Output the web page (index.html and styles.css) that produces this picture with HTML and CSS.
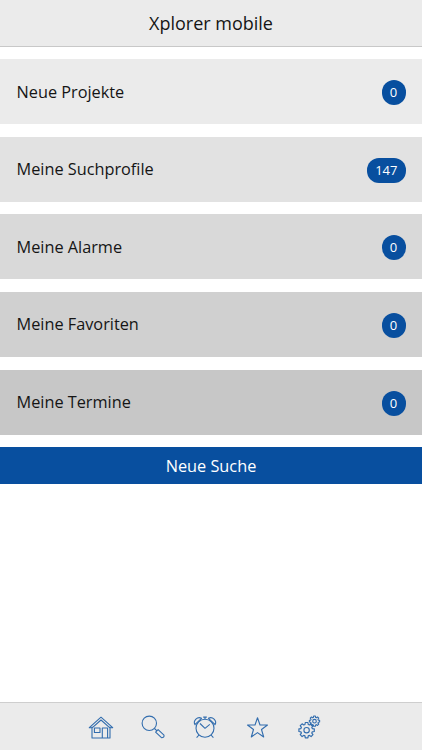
FILE: index.html
```html
<!DOCTYPE html>
<html lang="de">
<head>
    <meta charset="UTF-8">
    <meta name="viewport" content="width=device-width, initial-scale=1.0">
    <title>Xplorer mobile</title>
    <link rel="stylesheet" href="styles.css">
</head>
<body>

<!-- Header -->
<header class="header">
    <h1>Xplorer mobile</h1>
</header>

<!-- Menu -->
<main class="content">
    <ul class="menu">
        <li class="menu-item level-1"><span>Neue Projekte</span><span class="badge">0</span></li>
        <li class="menu-item level-2"><span>Meine Suchprofile</span><span class="badge">147</span></li>
        <li class="menu-item level-3"><span>Meine Alarme</span><span class="badge">0</span></li>
        <li class="menu-item level-4"><span>Meine Favoriten</span><span class="badge">0</span></li>
        <li class="menu-item level-5"><span>Meine Termine</span><span class="badge">0</span></li>
    </ul>
    <button class="search-button">Neue Suche</button>
</main>

<!-- Footer Navigation -->
<nav class="footer">
    <a class="nav-link" aria-label="Home">
        <svg viewBox="0 0 26 26">
            <path d="M4 12.8V24H22V12.8M1.3 13.7L13 3.2L24.7 13.7H21.6L13 6L4.4 13.7Z"/>
            <path d="M6.4 14H12V18.5H6.4ZM14.3 24V14H19.6V24"/>
        </svg>
    </a>
    <a class="nav-link" aria-label="Suche">
        <svg viewBox="0 0 26 26">
            <circle cx="9.3" cy="9.3" r="7.2"/>
            <path d="M14.5 14.5L16.7 16.7M15.6 18.1L18.1 15.6L24 21.2Q24.3 23.8 21.5 23.7Z"/>
        </svg>
    </a>
    <a class="nav-link" aria-label="Alarme">
        <svg viewBox="0 0 26 26">
            <circle cx="13" cy="14.2" r="9"/>
            <path d="M8 9.5L13 14.3L17.8 10.3M13 5.2V3.1M11.2 3.1H14.8"/>
            <path d="M2.9 10.6C.8 6.8 5.5 2 9.5 4.3ZM23.1 10.6C25.2 6.8 20.5 2 16.5 4.3Z"/>
            <path d="M7 21L4.6 23.7M19 21L21.4 23.7"/>
        </svg>
    </a>
    <a class="nav-link" aria-label="Favoriten">
        <svg viewBox="0 0 26 26">
            <path d="M13.5 3.7L16 11H23.5L17.5 15.5L19.7 23L13.5 18.6L7.3 23L9.5 15.5L3.5 11H11Z"/>
        </svg>
    </a>
    <a class="nav-link" aria-label="Einstellungen">
        <svg viewBox="0 0 26 26">
            <defs>
                <path id="gear" d="M-2.1-7.3L-1.7-9.85H1.7L2.1-7.3L3.68-6.65L5.76-8.17L8.17-5.76L6.65-3.68L7.3-2.1L9.85-1.7V1.7L7.3 2.1L6.65 3.68L8.17 5.76L5.76 8.17L3.68 6.65L2.1 7.3L1.7 9.85H-1.7L-2.1 7.3L-3.68 6.65L-5.76 8.17L-8.17 5.76L-6.65 3.68L-7.3 2.1L-9.85 1.7V-1.7L-7.3-2.1L-6.65-3.68L-8.17-5.76L-5.76-8.17L-3.68-6.65Z"/>
            </defs>
            <use class="gear-large" href="#gear" transform="translate(10.6 16.2) scale(.78)"/>
            <circle cx="10.6" cy="16.2" r="2.7"/>
            <use class="gear-small" href="#gear" transform="translate(18.5 7.2) scale(.52)"/>
            <circle cx="18.5" cy="7.2" r="1.8"/>
        </svg>
    </a>
</nav>

</body>
</html>
```

FILE: styles.css
```css
/* Global Reset */
* {
    margin: 0;
    padding: 0;
    box-sizing: border-box;
}

:root {
    --primary-color: #084f9f;
    --icon-color: #326dae;
    --bar-color: #ebebeb;
}

body {
    display: flex;
    flex-direction: column;
    height: 100vh;
    font-family: 'Open Sans', sans-serif;
    background-color: #fff;
    color: #151515;
}

/* Header */
.header {
    height: 47px;
    border-bottom: 1px solid #c8c8c8;
    background-color: var(--bar-color);
    text-align: center;
}

.header h1 {
    font-size: 18px;
    font-weight: 400;
    line-height: 46px;
}

/* Menu */
.content {
    flex: 1;
    padding-top: 12.4px;
}

.menu {
    list-style: none;
}

.menu-item {
    display: flex;
    align-items: center;
    justify-content: space-between;
    height: 65px;
    margin-bottom: 12.5px;
    padding: 0 16.5px;
    font-size: 16.3px;
}

.level-1 { background-color: #ebebeb; }
.level-2 { background-color: #e2e2e2; }
.level-3 { background-color: #d9d9d9; }
.level-4 { background-color: #d0d0d0; margin-bottom: 13px; }
.level-5 { background-color: #c7c7c7; }

.badge {
    min-width: 24px;
    height: 25px;
    margin-top: 2px;
    padding: 0 8px;
    border-radius: 12px;
    background-color: var(--primary-color);
    color: #fff;
    font-size: 13px;
    line-height: 25px;
    text-align: center;
}

.search-button {
    display: block;
    width: 100%;
    height: 37px;
    border: none;
    background-color: var(--primary-color);
    color: #fff;
    font-family: inherit;
    font-size: 16.3px;
}

/* Footer Navigation */
.footer {
    display: flex;
    justify-content: center;
    gap: 26px;
    height: 48px;
    padding: 11px 12px 0 0;
    border-top: 1px solid #cecece;
    background-color: var(--bar-color);
}

.nav-link {
    width: 26px;
    height: 26px;
}

.nav-link svg {
    display: block;
    width: 26px;
    height: 26px;
    fill: none;
    stroke: var(--icon-color);
    stroke-width: 1.1;
    stroke-linejoin: round;
}

.gear-large {
    stroke-width: 1.5;
}

.gear-small {
    stroke-width: 2.1;
}
```
